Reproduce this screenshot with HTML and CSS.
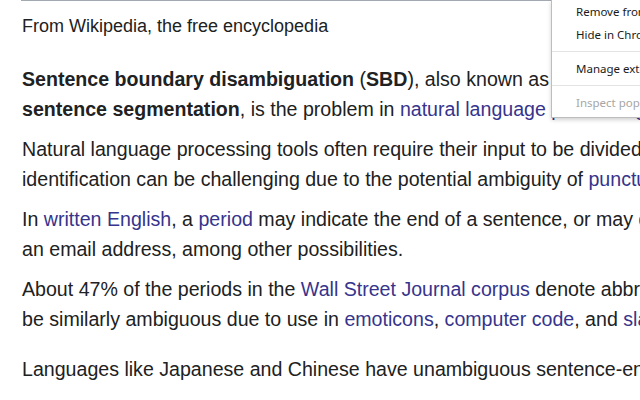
FILE: index.html
```html
<!DOCTYPE html>
<html lang="en">
  <head>
    <meta charset="UTF-8" />
    <meta name="viewport" content="width=device-width, initial-scale=1.0" />
    <title>Sentence boundary disambiguation - Wikipedia</title>
    <link rel="stylesheet" href="styles.css">
  </head>
  <body>
    <div class="article">
      <div class="site-sub">From Wikipedia, the free encyclopedia</div>

      <p class="para para--lead">
        <b>Sentence boundary disambiguation</b> (<b>SBD</b>), also known as <b>sentence breaking</b>, <b>sentence boundary detection</b>, and<br>
        <b>sentence segmentation</b>, is the problem in <a href="#">natural language processing</a> of deciding where sentences begin and end.
      </p>

      <p class="para">
        Natural language processing tools often require their input to be divided into sentences; however, sentence boundary<br>
        identification can be challenging due to the potential ambiguity of <a href="#">punctuation marks</a>.
      </p>

      <p class="para">
        In <a href="#">written English</a>, a <a href="#">period</a> may indicate the end of a sentence, or may denote an abbreviation, a decimal point, an ellipsis, or<br>
        an email address, among other possibilities.
      </p>

      <p class="para">
        About 47% of the periods in the <a href="#">Wall Street Journal corpus</a> denote abbreviations. Question marks and exclamation marks can<br>
        be similarly ambiguous due to use in <a href="#">emoticons</a>, <a href="#">computer code</a>, and <a href="#">slang</a>.
      </p>

      <p class="para para--last">
        Languages like Japanese and Chinese have unambiguous sentence-ending markers.
      </p>
    </div>

    <!-- 拡張機能のコンテキストメニュー -->
    <div class="context-menu">
      <div class="menu-item">Remove from Chrome...</div>
      <div class="menu-item">Hide in Chrome menu</div>
      <div class="menu-sep"></div>
      <div class="menu-item">Manage extensions</div>
      <div class="menu-sep"></div>
      <div class="menu-item menu-item--disabled">Inspect popup</div>
    </div>
  </body>
</html>
```

FILE: styles.css
```css
body {
  margin: 0;
  background: #ffffff;
  overflow: hidden;
  font-family: "Liberation Sans", Arial, sans-serif;
  color: #202122;
}

/* 本文 */
.article {
  margin-left: 21px;
  border-top: 1px solid #a2a9b1;
  padding-left: 1px;
  white-space: nowrap;
  font-size: 19.6px;
  line-height: 30px;
}

.site-sub {
  margin-top: 10px;
  font-size: 18px;
}

.para {
  margin: 10px 0 0;
}

.para--lead {
  margin-top: 23px;
}

.para--last {
  margin-top: 20px;
}

.para a {
  color: #36348c;
  text-decoration: none;
}

/* コンテキストメニュー */
.context-menu {
  position: absolute;
  top: 0;
  left: 551px;
  width: 220px;
  padding-bottom: 3px;
  background: #ffffff;
  border: 1px solid #bdbdbd;
  border-top: none;
  box-shadow: 0 2px 4px rgba(0, 0, 0, 0.18);
  font-family: "Noto Sans", "Segoe UI", sans-serif;
  font-size: 11.5px;
  color: #1a1a1a;
}

.menu-item {
  height: 23px;
  line-height: 23px;
  padding-left: 24px;
  white-space: nowrap;
}

.menu-item--disabled {
  color: #a6a6a6;
}

.menu-sep {
  height: 1px;
  margin: 5px 0;
  background: #e3e3e3;
}
```
